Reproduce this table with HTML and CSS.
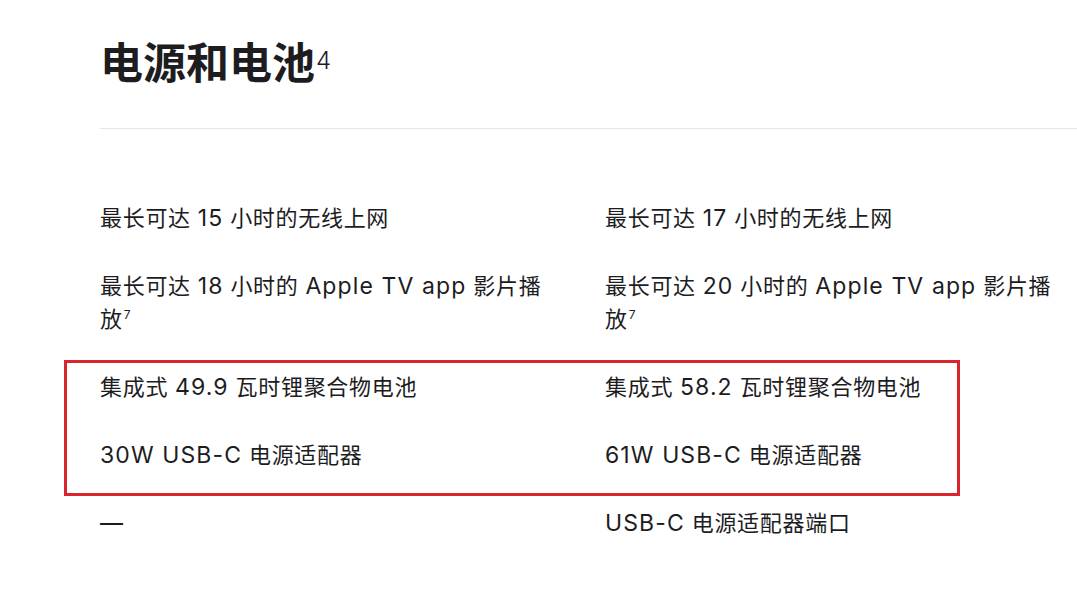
FILE: index.html
```html
<!DOCTYPE html>
<html lang="zh-CN">
<head>
  <meta charset="UTF-8">
  <meta name="viewport" content="width=device-width, initial-scale=1.0">
  <title>电源和电池</title>
  <link rel="stylesheet" href="styles.css">
</head>
<body>
  <div class="section">
    <!-- 标题 -->
    <h2 class="section-title">电源和电池<sup class="title-note">4</sup></h2>
    <div class="divider"></div>

    <!-- 对比表 -->
    <div class="compare">
      <div class="column">
        <p class="item">最长可达 <span class="en">15</span> 小时的无线上网</p>
        <p class="item">最长可达 <span class="en">18</span> 小时的 <span class="en">Apple TV app</span> 影片播放<sup class="note">7</sup></p>
        <p class="item">集成式 <span class="en">49.9</span> 瓦时锂聚合物电池</p>
        <p class="item"><span class="en">30W USB-C</span> 电源适配器</p>
        <p class="item"><span class="en">—</span></p>
      </div>
      <div class="column">
        <p class="item">最长可达 <span class="en">17</span> 小时的无线上网</p>
        <p class="item">最长可达 <span class="en">20</span> 小时的 <span class="en">Apple TV app</span> 影片播放<sup class="note">7</sup></p>
        <p class="item">集成式 <span class="en">58.2</span> 瓦时锂聚合物电池</p>
        <p class="item"><span class="en">61W USB-C</span> 电源适配器</p>
        <p class="item"><span class="en">USB-C</span> 电源适配器端口</p>
      </div>
    </div>

    <!-- 标注框 -->
    <div class="highlight"></div>
  </div>
</body>
</html>
```

FILE: styles.css
```css
* {
  margin: 0;
  padding: 0;
  box-sizing: border-box;
}

body {
  font-family: 'Inter', 'Noto Sans CJK SC', sans-serif;
  background-color: #fff;
  color: #1d1d1f;
  overflow: hidden;
}

.section {
  position: relative;
  padding: 36px 0 0 100px;
}

.section-title {
  font-size: 43px;
  font-weight: 700;
  line-height: 54px;
}

.title-note {
  font-size: 24px;
  font-weight: 300;
  line-height: 1;
  vertical-align: top;
  position: relative;
  top: 13px;
  margin-left: 1px;
}

.divider {
  margin-top: 38px;
  height: 1px;
  background-color: #e6e6e9;
}

.compare {
  display: flex;
  gap: 50px;
  padding-top: 73px;
}

.column {
  width: 455px;
  display: flex;
  flex-direction: column;
  gap: 35px;
}

.item {
  font-size: 22px;
  line-height: 33px;
  letter-spacing: 0.7px;
}

/* 拉丁字符稍宽 */
.en {
  font-size: 23px;
  letter-spacing: 1.1px;
}

.note {
  font-size: 12px;
  letter-spacing: 0;
  vertical-align: top;
  position: relative;
  top: -5px;
  margin-left: 1px;
}

.highlight {
  position: absolute;
  left: 64px;
  top: 360px;
  width: 896px;
  height: 136px;
  border: 3px solid #d9252e;
}
```
